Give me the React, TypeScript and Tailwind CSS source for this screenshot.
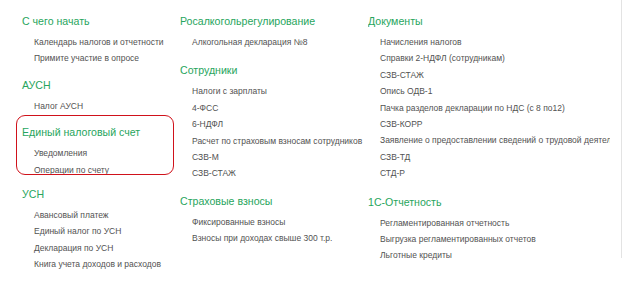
import React from "react";

type Section = { title: string; items: string[]; highlight?: boolean };

const col1: Section[] = [
  { title: "С чего начать", items: ["Календарь налогов и отчетности", "Примите участие в опросе"] },
  { title: "АУСН", items: ["Налог АУСН"] },
  { title: "Единый налоговый счет", items: ["Уведомления", "Операции по счету"], highlight: true },
  {
    title: "УСН",
    items: ["Авансовый платеж", "Единый налог по УСН", "Декларация по УСН", "Книга учета доходов и расходов"],
  },
];

const col2: Section[] = [
  { title: "Росалкогольрегулирование", items: ["Алкогольная декларация №8"] },
  {
    title: "Сотрудники",
    items: [
      "Налоги с зарплаты",
      "4-ФСС",
      "6-НДФЛ",
      "Расчет по страховым взносам сотрудников",
      "СЗВ-М",
      "СЗВ-СТАЖ",
    ],
  },
  { title: "Страховые взносы", items: ["Фиксированные взносы", "Взносы при доходах свыше 300 т.р."] },
];

const col3: Section[] = [
  {
    title: "Документы",
    items: [
      "Начисления налогов",
      "Справки 2-НДФЛ (сотрудникам)",
      "СЗВ-СТАЖ",
      "Опись ОДВ-1",
      "Пачка разделов декларации по НДС (с 8 по12)",
      "СЗВ-КОРР",
      "Заявление о предоставлении сведений о трудовой деятельности",
      "СЗВ-ТД",
      "СТД-Р",
    ],
  },
  {
    title: "1С-Отчетность",
    items: ["Регламентированная отчетность", "Выгрузка регламентированных отчетов", "Льготные кредиты"],
  },
];

function SectionBlock({ s }: { s: Section }) {
  return (
    <div className="relative mb-[11px]">
      {s.highlight && (
        <div className="absolute left-[-6px] top-[-10px] w-[158px] h-[60px] rounded-[9px] border-[1.5px] border-[#d0121b]" />
      )}
      <div className="text-[10.6px] leading-[14px] text-[#27a55d] whitespace-nowrap">{s.title}</div>
      <div className="mt-[6px] pl-[12px]">
        {s.items.map((it, i) => (
          <div key={i} className="text-[8.5px] leading-[16.4px] text-[#525252] whitespace-nowrap">
            {it}
          </div>
        ))}
      </div>
    </div>
  );
}

export default function App() {
  return (
    <div
      className="relative w-[623px] h-[284px] bg-white overflow-hidden"
      style={{ fontFamily: '"Liberation Sans", Arial, sans-serif' }}
    >
      <div className="flex pl-[22px] pt-[14px]">
        <div className="flex flex-col w-[158px] shrink-0">
          {col1.map((s, i) => (
            <div key={i} className={i === 2 ? "-mb-[2px]" : ""}>
              <SectionBlock s={s} />
            </div>
          ))}
        </div>
        <div className="flex flex-col w-[188px] shrink-0">
          {col2.map((s, i) => (
            <div key={i} className={i === 0 ? "mb-[2px]" : i === 1 ? "mb-[1px]" : ""}>
              <SectionBlock s={s} />
            </div>
          ))}
        </div>
        <div className="flex flex-col w-[242px] shrink-0 overflow-hidden">
          {col3.map((s, i) => (
            <div key={i} className={i === 0 ? "mb-[2px]" : ""}>
              <SectionBlock s={s} />
            </div>
          ))}
        </div>
      </div>
      <div className="absolute left-[621px] top-0 w-px h-[258px] bg-[#e3e3e3]" />
    </div>
  );
}
